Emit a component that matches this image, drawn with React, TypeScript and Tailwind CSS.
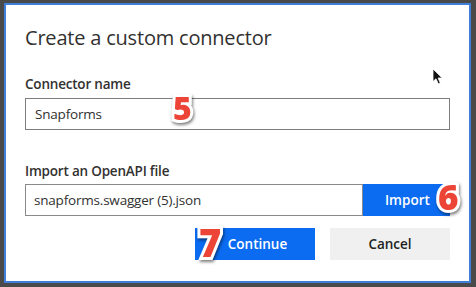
import React from 'react';

const Badge = ({ n, className }: { n: string; className: string }) => (
  <span
    className={`absolute font-['Open_Sans',sans-serif] font-extrabold text-[#ec4537] leading-none [-webkit-text-stroke:6px_white] [paint-order:stroke_fill] drop-shadow-[1px_2px_1.5px_rgba(0,0,0,0.5)] ${className}`}
  >
    {n}
  </span>
);

export default function App() {
  return (
    <div className="w-[476px] h-[287px] bg-[#4a4a4a] pl-[4px] pt-[3px] overflow-hidden font-['Open_Sans',sans-serif]">
      <div className="relative w-[467px] h-[280px] bg-white border-2 border-[#3f7fd9] px-[19px] pt-[19px] text-[#323130]">
        <h1 className="text-[20px] leading-[28px] tracking-[-0.2px]">Create a custom connector</h1>

        <div className="mt-[22px] text-[13.5px] leading-[20px] font-semibold tracking-[-0.2px]">Connector name</div>
        <div className="mt-[4px] w-[425px] h-[32px] border border-[#7d7d7d] flex items-center px-[9px] text-[13.5px] tracking-[-0.2px]">
          Snapforms
        </div>

        <div className="mt-[31px] text-[13.5px] leading-[20px] font-semibold tracking-[-0.2px]">Import an OpenAPI file</div>
        <div className="mt-[3px] w-[425px] h-[32px] flex">
          <div className="flex-1 border border-[#8a8a8a] flex items-center px-[8px] text-[13.5px] tracking-[-0.2px]">
            snapforms.swagger (5).json
          </div>
          <div className="w-[87px] bg-[#0b6cf2] text-white flex items-center pl-[22px] text-[13.5px] font-semibold">
            Import
          </div>
        </div>

        <div className="mt-[12px] w-[425px] flex justify-end gap-[15px]">
          <div className="w-[120px] h-[32px] bg-[#0b6cf2] text-white flex items-center justify-center pl-[5px] text-[13.5px] font-semibold">
            Continue
          </div>
          <div className="w-[120px] h-[32px] bg-[#f0f0f0] text-[#201f1e] flex items-center justify-center text-[13.5px] font-semibold">
            Cancel
          </div>
        </div>

        <Badge n="5" className="left-[167px] top-[87px] text-[32px]" />
        <Badge n="6" className="left-[432px] top-[174px] text-[35px]" />
        <Badge n="7" className="left-[193px] top-[218px] text-[38px]" />

        <svg className="absolute left-[426px] top-[63px]" width="12" height="17" viewBox="0 0 12 17">
          <path d="M1 1 L1 13.5 L4 10.8 L6.3 15.8 L8.3 14.9 L6.1 10 L10.2 10 Z" fill="#111" stroke="#fff" strokeWidth="0.8" />
        </svg>
      </div>
    </div>
  );
}
